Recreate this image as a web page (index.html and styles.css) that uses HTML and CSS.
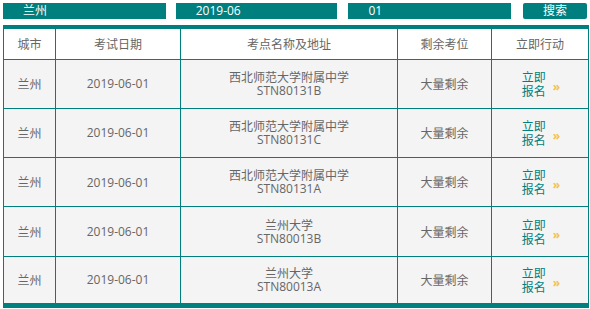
FILE: index.html
```html
<!DOCTYPE html>
<html lang="zh-CN">
<head>
<meta charset="utf-8">
<title>考位查询</title>
<link rel="stylesheet" href="styles.css">
</head>
<body>
<div class="page">
  <div class="filters">
    <div class="field">兰州</div>
    <div class="field">2019-06</div>
    <div class="field">01</div>
    <button class="search">搜索</button>
  </div>
  <div class="table-wrap">
    <table class="sessions">
      <colgroup>
        <col class="c-city"><col class="c-date"><col class="c-site"><col class="c-seats"><col class="c-action">
      </colgroup>
      <thead>
        <tr><th>城市</th><th>考试日期</th><th>考点名称及地址</th><th>剩余考位</th><th>立即行动</th></tr>
      </thead>
      <tbody>
        <tr><td>兰州</td><td>2019-06-01</td><td class="site">西北师范大学附属中学<br>STN80131B</td><td>大量剩余</td><td><a class="enroll" href="#"><span class="enroll-text">立即报名</span><span class="arrow">»</span></a></td></tr>
        <tr><td>兰州</td><td>2019-06-01</td><td class="site">西北师范大学附属中学<br>STN80131C</td><td>大量剩余</td><td><a class="enroll" href="#"><span class="enroll-text">立即报名</span><span class="arrow">»</span></a></td></tr>
        <tr><td>兰州</td><td>2019-06-01</td><td class="site">西北师范大学附属中学<br>STN80131A</td><td>大量剩余</td><td><a class="enroll" href="#"><span class="enroll-text">立即报名</span><span class="arrow">»</span></a></td></tr>
        <tr><td>兰州</td><td>2019-06-01</td><td class="site">兰州大学<br>STN80013B</td><td>大量剩余</td><td><a class="enroll" href="#"><span class="enroll-text">立即报名</span><span class="arrow">»</span></a></td></tr>
        <tr><td>兰州</td><td>2019-06-01</td><td class="site">兰州大学<br>STN80013A</td><td>大量剩余</td><td><a class="enroll" href="#"><span class="enroll-text">立即报名</span><span class="arrow">»</span></a></td></tr>
      </tbody>
    </table>
  </div>
</div>
</body>
</html>
```
FILE: styles.css
```css
* { box-sizing: border-box; }
html, body { margin: 0; padding: 0; background: #fff; }
body {
  font-family: "Open Sans", "Noto Sans CJK SC", sans-serif;
  font-size: 12px;
  color: #666;
}
.page { padding: 3px 3px 0 3px; width: 590px; }

.filters {
  display: flex;
  height: 16px;
  align-items: stretch;
}
.field {
  background: #007f7f;
  color: #fff;
  width: 163px;
  padding-left: 20px;
  line-height: 16px;
  margin-right: 10px;
}
.field:nth-child(2) { width: 162px; margin-right: 11px; }
.field:nth-child(3) { width: 163px; margin-right: 12px; }
.search {
  width: 64px;
  border: 0;
  border-radius: 2px;
  background: #007f7f;
  color: #fff;
  font: inherit;
  line-height: 16px;
  padding: 0;
}

.table-wrap {
  margin-top: 6px;
  width: 585px;
}
.sessions {
  width: 585px;
  table-layout: fixed;
  border-collapse: collapse;
  border-top: 4px solid #007f7f;
  border-bottom: 5px solid #007f7f;
}
.c-city { width: 52px; }
.c-date { width: 125px; }
.c-site { width: 217px; }
.c-seats { width: 94px; }
.c-action { width: 97px; }

.sessions th, .sessions td {
  border: 1px solid #007f7f;
  text-align: center;
  vertical-align: middle;
  padding: 0;
}
.sessions th {
  height: 32px;
  font-weight: normal;
  background: #fff;
}
.sessions td {
  height: 49.3px;
  background: #f4f4f4;
}
.sessions td.site { line-height: 13px; }

.enroll {
  display: inline-flex;
  align-items: center;
  text-decoration: none;
  color: #007f7f;
  margin-left: 2px;
}
.enroll-text {
  width: 25px;
  line-height: 14px;
  text-align: left;
}
.arrow {
  color: #f5c24c;
  font-weight: bold;
  font-size: 12px;
  margin-left: 6px;
  margin-top: 3px;
}
```
